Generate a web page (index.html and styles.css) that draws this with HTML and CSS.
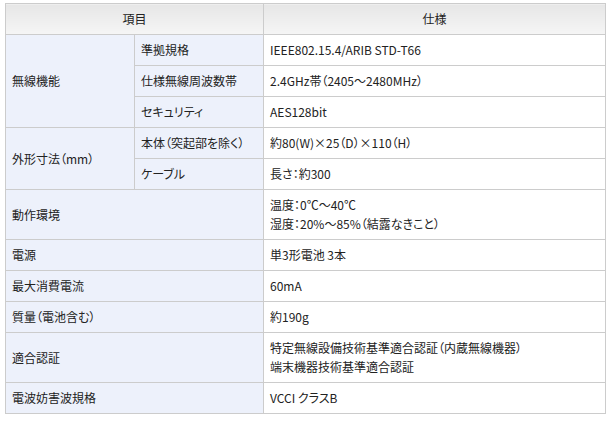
FILE: index.html
```html
<!DOCTYPE html>
<html lang="ja">
<head>
<meta charset="utf-8">
<link rel="stylesheet" href="styles.css">
</head>
<body>
<table class="spec">
  <colgroup><col class="c1"><col class="c2"><col class="c3"></colgroup>
  <thead>
    <tr><th colspan="2">項目</th><th>仕様</th></tr>
  </thead>
  <tbody>
    <tr><td class="lbl" rowspan="3">無線機能</td><td class="lbl">準拠規格</td><td>IEEE802.15.4/ARIB STD-T66</td></tr>
    <tr><td class="lbl">仕様無線周波数帯</td><td>2.4GHz帯（2405～2480MHz）</td></tr>
    <tr><td class="lbl">セキュリティ</td><td>AES128bit</td></tr>
    <tr><td class="lbl" rowspan="2">外形寸法（mm）</td><td class="lbl">本体（突起部を除く）</td><td>約80(W)×25（D）×110（H）</td></tr>
    <tr><td class="lbl">ケーブル</td><td>長さ：約300</td></tr>
    <tr><td class="lbl" colspan="2">動作環境</td><td>温度：0℃～40℃<br>湿度：20%～85%（結露なきこと）</td></tr>
    <tr><td class="lbl" colspan="2">電源</td><td>単3形電池 3本</td></tr>
    <tr><td class="lbl" colspan="2">最大消費電流</td><td>60mA</td></tr>
    <tr><td class="lbl" colspan="2">質量（電池含む）</td><td>約190g</td></tr>
    <tr><td class="lbl" colspan="2">適合認証</td><td>特定無線設備技術基準適合認証（内蔵無線機器）<br>端末機器技術基準適合認証</td></tr>
    <tr><td class="lbl" colspan="2">電波妨害波規格</td><td>VCCI クラスB</td></tr>
  </tbody>
</table>
</body>
</html>
```
FILE: styles.css
```css
html, body {
  margin: 0;
  padding: 0;
  background: #ffffff;
}
body {
  padding: 3px 0 0 5px;
  font-family: "Noto Sans CJK JP", "Noto Sans", sans-serif;
  font-size: 12px;
  color: #222222;
  font-feature-settings: "palt";
}
.spec {
  border-collapse: collapse;
  width: 600px;
  table-layout: fixed;
  border: 1px solid #c4c4c4;
}
.c1 { width: 129px; }
.c2 { width: 129px; }
.c3 { width: 342px; }
.spec th, .spec td {
  border: 1px solid #cccccc;
  line-height: 19px;
  padding: 5px 6px 6px 6px;
  text-align: left;
  vertical-align: middle;
  font-weight: normal;
}
.spec th {
  text-align: center;
  background: linear-gradient(#e6e6e6, #f5f5f5);
  height: 19px;
}
.spec td.lbl {
  background: #edf1fb;
}
```
